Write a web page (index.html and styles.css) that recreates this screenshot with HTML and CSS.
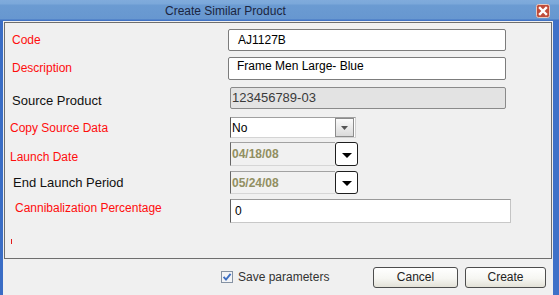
FILE: index.html
```html
<!DOCTYPE html>
<html lang="en">
<head>
<meta charset="utf-8">
<title>Create Similar Product</title>
<link rel="stylesheet" href="styles.css">
</head>
<body>
<div class="window">
  <div class="titlebar">
    <span class="title">Create Similar Product</span>
    <span class="close">
      <svg width="14" height="14" viewBox="0 0 14 14">
        <rect x="0.5" y="0.5" width="13" height="13" rx="2" fill="#c04c3a" stroke="#e9c9bf"/>
        <path d="M4 4 L10 10 M10 4 L4 10" stroke="#ffffff" stroke-width="2.4" stroke-linecap="square"/>
      </svg>
    </span>
  </div>
  <div class="frame">
    <div class="panel">
      <div class="row r-code">
        <span class="lbl red">Code</span>
        <div class="input txt w-code">AJ1127B</div>
      </div>
      <div class="row r-desc">
        <span class="lbl red">Description</span>
        <div class="input txt w-desc">Frame Men Large- Blue</div>
      </div>
      <div class="row r-src">
        <span class="lbl dark">Source Product</span>
        <div class="input ro w-src">123456789-03</div>
      </div>
      <div class="row r-copy">
        <span class="lbl red">Copy Source Data</span>
        <div class="select">
          <span class="sel-val">No</span>
          <span class="sel-btn">
            <svg width="7" height="4" viewBox="0 0 7 4"><path d="M0 0 H7 L3.5 4 Z" fill="#555"/></svg>
          </span>
        </div>
      </div>
      <div class="row r-launch">
        <span class="lbl red">Launch Date</span>
        <div class="datebox">
          <span class="date">04/18/08</span>
          <span class="dbtn">
            <svg width="10" height="5" viewBox="0 0 10 5"><path d="M0 0 H10 L5 5 Z" fill="#000"/></svg>
          </span>
        </div>
      </div>
      <div class="row r-end">
        <span class="lbl dark">End Launch Period</span>
        <div class="datebox">
          <span class="date">05/24/08</span>
          <span class="dbtn">
            <svg width="10" height="5" viewBox="0 0 10 5"><path d="M0 0 H10 L5 5 Z" fill="#000"/></svg>
          </span>
        </div>
      </div>
      <div class="row r-can">
        <span class="lbl red">Cannibalization Percentage</span>
        <div class="input txt w-can">0</div>
      </div>
      <span class="tick"></span>
    </div>
    <div class="footer">
      <span class="check">
        <svg width="12" height="12" viewBox="0 0 12 12">
          <rect x="0.5" y="0.5" width="11" height="11" fill="#f3f4f6" stroke="#8592a3"/>
          <path d="M2.6 5.8 L5 8.6 L9.6 2.8" fill="none" stroke="#3e6fc2" stroke-width="1.9"/>
        </svg>
      </span>
      <span class="check-label">Save parameters</span>
      <button class="btn btn-cancel" type="button">Cancel</button>
      <button class="btn btn-create" type="button">Create</button>
    </div>
  </div>
</div>
</body>
</html>
```

FILE: styles.css
```css
* {
  box-sizing: border-box;
}

html,
body {
  margin: 0;
  padding: 0;
}

body {
  width: 559px;
  height: 295px;
  overflow: hidden;
  background: #f0f0f0;
  font-family: "Liberation Sans", Arial, sans-serif;
  font-size: 12px;
}

.window {
  display: flex;
  flex-direction: column;
  height: 295px;
}

/* Title bar */
.titlebar {
  height: 21px;
  flex-shrink: 0;
  display: flex;
  align-items: center;
  background: linear-gradient(to bottom,
      #80abdc 0px, #7ba8da 4px, #6b9bd2 5px, #6797d0 19px, #4173c4 20px, #3f70c2 21px);
}

.title {
  padding-left: 165px;
  color: #1b2540;
  font-size: 12px;
  line-height: 14px;
}

.close {
  margin-left: auto;
  margin-right: 9px;
  width: 14px;
  height: 14px;
  display: block;
}

.close svg {
  display: block;
}

/* Frame */
.frame {
  flex: 1;
  display: flex;
  flex-direction: column;
  border-left: 3px solid #3a6dc5;
  border-right: 6px solid #3f71c8;
  background: #f0f0f0;
}

.panel {
  margin: 1px 1px 0 1px;
  height: 237px;
  flex-shrink: 0;
  border: 1px solid #6e6e6e;
  display: flex;
  flex-direction: column;
}

/* Rows */
.row {
  display: flex;
  align-items: center;
  flex-shrink: 0;
}

.lbl {
  width: 223px;
  flex-shrink: 0;
  line-height: 14px;
  font-size: 12px;
}

.lbl.red {
  color: #ff0d0d;
}

.lbl.dark {
  color: #111;
  font-size: 13px;
}

.r-code {
  margin-top: 6px;
  height: 22px;
}

.r-code .lbl,
.r-desc .lbl,
.r-src .lbl {
  padding-left: 7px;
}

.r-desc {
  margin-top: 6px;
  height: 23px;
  align-items: flex-start;
}

.r-desc .lbl {
  padding-top: 4px;
}

.r-src {
  margin-top: 7px;
  height: 22px;
}

.r-src .lbl {
  padding-top: 5px;
}

.r-copy {
  margin-top: 8px;
  height: 21px;
}

.r-copy .lbl,
.r-launch .lbl {
  padding-left: 5px;
}

.r-launch {
  margin-top: 4px;
  height: 24px;
}

.r-launch .lbl {
  padding-top: 5px;
}

.r-end {
  margin-top: 5px;
  height: 23px;
}

.r-end .lbl {
  padding-left: 8px;
}

.r-can {
  margin-top: 5px;
  height: 24px;
}

.r-can .lbl {
  padding-left: 10px;
  padding-bottom: 7px;
}

/* Inputs */
.input {
  display: flex;
  align-items: center;
  height: 100%;
  border: 1px solid #7c7c7c;
  border-radius: 2px;
  background: #fff;
  color: #000;
  font-size: 12px;
  line-height: 14px;
  white-space: nowrap;
}

.w-code {
  width: 278px;
  padding-left: 9px;
}

.w-desc {
  width: 278px;
  padding-left: 8px;
  align-items: flex-start;
  padding-top: 1px;
}

.w-src {
  margin-left: 2px;
  width: 276px;
  padding-left: 1px;
  background: #e3e3e3;
  border-color: #8a8a8a;
  color: #3a3a3a;
  font-size: 13px;
}

.w-can {
  margin-left: 2px;
  width: 281px;
  padding-left: 4px;
  border-color: #9a9a9a #c4c4c4 #c8c8c8 #5e5e5e;
  border-radius: 0;
}

/* Select */
.select {
  margin-left: 2px;
  width: 126px;
  height: 21px;
  display: flex;
  align-items: center;
  background: #fff;
  border: 1px solid;
  border-color: #a0a0a0 #cfcfcf #d4d4d4 #5a5a5a;
}

.sel-val {
  flex: 1;
  padding-left: 1px;
  color: #000;
  line-height: 14px;
}

.sel-btn {
  width: 19px;
  height: 19px;
  margin-right: 1px;
  display: flex;
  align-items: center;
  justify-content: center;
  border: 1px solid #8c8c8c;
  background: linear-gradient(#fbfbfb, #dadada);
}

.sel-btn svg {
  display: block;
}

/* Date pickers */
.datebox {
  margin-left: 2px;
  height: 100%;
  display: flex;
}

.date {
  width: 105px;
  height: 100%;
  display: flex;
  align-items: center;
  padding-left: 1px;
  background: #f1f1f1;
  border: 1px solid;
  border-color: #a2a2a2 transparent #d6d6d6 #666;
  border-right: none;
  color: #918f62;
  font-weight: bold;
  line-height: 14px;
}

.dbtn {
  width: 23px;
  height: 100%;
  display: flex;
  align-items: center;
  justify-content: center;
  padding-top: 2px;
  background: #fff;
  border: 1px solid #1e1e1e;
  border-radius: 3px;
}

.dbtn svg {
  display: block;
}

.tick {
  display: block;
  margin-top: 16px;
  margin-left: 6px;
  width: 1px;
  height: 5px;
  background: #e31b1b;
}

/* Footer */
.footer {
  height: 36px;
  flex-shrink: 0;
  display: flex;
  align-items: center;
  padding-left: 218px;
  padding-right: 7px;
}

.check {
  width: 12px;
  height: 12px;
  display: block;
}

.check svg {
  display: block;
}

.check-label {
  margin-left: 5px;
  color: #333;
  font-size: 12px;
  line-height: 14px;
}

.btn {
  height: 21px;
  padding: 0;
  margin: 0;
  border: 1px solid #4d4d4d;
  border-radius: 3px;
  background: linear-gradient(#ffffff, #f6f6f2 55%, #e3e1d7);
  font-family: "Liberation Sans", Arial, sans-serif;
  font-size: 12px;
  color: #222;
  display: flex;
  align-items: center;
  justify-content: center;
}

.btn-cancel {
  margin-left: auto;
  width: 85px;
}

.btn-create {
  margin-left: 7px;
  width: 81px;
}
```
